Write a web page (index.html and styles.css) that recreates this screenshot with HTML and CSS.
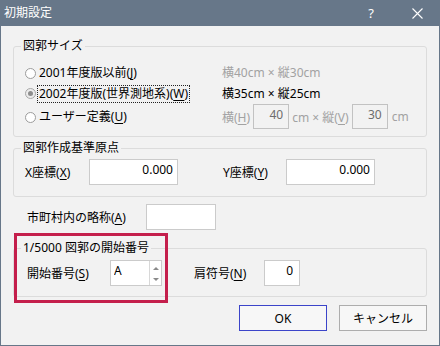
FILE: index.html
```html
<!DOCTYPE html>
<html lang="ja">
<head>
  <meta charset="UTF-8">
  <title>初期設定</title>
  <link rel="stylesheet" href="styles.css">
</head>
<body>
  <div class="window">
    <div class="titlebar">
      <span class="titlebar__text">初期設定</span>
      <span class="titlebar__btn">?</span>
      <span class="titlebar__btn">
        <svg width="11" height="11" viewBox="0 0 11 11"><path d="M0.5 0.5 L10.5 10.5 M10.5 0.5 L0.5 10.5" stroke="#fff" stroke-width="1.1" fill="none"/></svg>
      </span>
    </div>

    <div class="dialog">
      <!-- 図郭サイズ -->
      <div class="group group--size">
        <div class="group__title">図郭サイズ</div>
        <div class="size-grid">
          <label class="radio"><span class="radio__dot"></span>2001年度版以前(<u>J</u>)</label>
          <div class="size-note is-disabled">横40cm × 縦30cm</div>

          <label class="radio radio--checked"><span class="radio__dot"></span><span class="radio__focus">2002年度版(世界測地系)(<u>W</u>)</span></label>
          <div class="size-note">横35cm × 縦25cm</div>

          <label class="radio"><span class="radio__dot"></span>ユーザー定義(<u>U</u>)</label>
          <div class="size-custom is-disabled">
            <span>横(<u>H</u>)</span>
            <input class="field field--disabled field--small" value="40" disabled>
            <span>cm × 縦(<u>V</u>)</span>
            <input class="field field--disabled field--small" value="30" disabled>
            <span>cm</span>
          </div>
        </div>
      </div>

      <!-- 図郭作成基準原点 -->
      <div class="group group--origin">
        <div class="group__title">図郭作成基準原点</div>
        <div class="coord-row">
          <span class="coord-label">X座標(<u>X</u>)</span>
          <input class="field field--coord" value="0.000">
          <span class="coord-label coord-label--y">Y座標(<u>Y</u>)</span>
          <input class="field field--coord" value="0.000">
        </div>
      </div>

      <div class="abbr-row">
        <span class="abbr-label">市町村内の略称(<u>A</u>)</span>
        <input class="field field--abbr" value="">
      </div>

      <!-- 1/5000 図郭の開始番号 -->
      <div class="group group--start">
        <div class="group__title">1/5000 図郭の開始番号</div>
        <div class="start-row">
          <span class="start-label">開始番号(<u>S</u>)</span>
          <div class="spin">
            <input class="spin__input" value="A">
            <div class="spin__btns">
              <span class="spin__arrow spin__arrow--up"></span>
              <span class="spin__arrow spin__arrow--down"></span>
            </div>
          </div>
          <span class="start-label start-label--suffix">肩符号(<u>N</u>)</span>
          <input class="field field--small field--suffix" value="0">
        </div>
      </div>

      <div class="buttons">
        <button class="btn btn--default">OK</button>
        <button class="btn">キャンセル</button>
      </div>
    </div>

    <div class="highlight"></div>
  </div>
</body>
</html>
```

FILE: styles.css
```css
/* ====== ダイアログ ====== */
html, body {
  margin: 0;
  padding: 0;
}

body {
  font-family: "Noto Sans", "Noto Sans CJK JP", sans-serif;
  font-size: 12px;
  color: #000;
}

u {
  text-decoration-thickness: 1px;
  text-underline-offset: 2px;
}

.window {
  position: relative;
  box-sizing: border-box;
  width: 440px;
  height: 346px;
  border: 1px solid #677789;
  border-top: 0;
  background: #f2f2f2;
}

/* ---- タイトルバー ---- */
.titlebar {
  display: flex;
  align-items: center;
  height: 26px;
  margin: 0 -1px;
  background: #677789;
  color: #fff;
}

.titlebar__text {
  flex: 1;
  padding-left: 4px;
  line-height: 26px;
}

.titlebar__btn {
  display: flex;
  align-items: center;
  justify-content: center;
  width: 46px;
  height: 26px;
  font-size: 13px;
}

/* ---- 本体 ---- */
.dialog {
  padding: 0 12px;
}

.group {
  border: 1px solid #dcdcdc;
  border-radius: 3px;
}

.group__title {
  width: fit-content;
  margin: -9px 0 0 7px;
  padding: 0 2px;
  line-height: 16px;
  background: #f2f2f2;
}

.group--size   { margin-top: 20px; padding-bottom: 6px; }
.group--origin { margin-top: 11px; padding-bottom: 11px; }
.group--start  { margin-top: 18px; padding-bottom: 10px; }

/* 図郭サイズ */
.size-grid {
  display: grid;
  grid-template-columns: 197px 1fr;
  grid-template-rows: 20px 21px 26px;
  align-items: center;
  margin-top: 9px;
  padding-left: 11px;
}

.radio {
  display: flex;
  align-items: center;
  line-height: 16px;
}

.radio__dot {
  position: relative;
  box-sizing: border-box;
  width: 11px;
  height: 11px;
  margin-right: 3px;
  border: 1px solid #9c9c9c;
  border-radius: 50%;
  background: #fff;
}

.radio--checked .radio__dot {
  background: #ececec;
  border-color: #a8a8a8;
}

.radio--checked .radio__dot::after {
  content: '';
  position: absolute;
  top: 2px;
  left: 2px;
  width: 5px;
  height: 5px;
  border-radius: 50%;
  background: #8d8d8d;
}

.radio__focus {
  margin-left: -2px;
  padding: 0 1px;
  border: 1px dotted #222;
}

.size-note {
  line-height: 16px;
}

.is-disabled {
  color: #a2a2a2;
}

.size-custom {
  display: flex;
  align-items: center;
  gap: 3px;
  align-self: start;
}

.size-custom span:last-child {
  margin-left: 1px;
}

/* 入力欄 */
.field {
  box-sizing: border-box;
  height: 26px;
  margin: 0;
  padding: 0 5px 5px;
  border: 1px solid #cbcbcb;
  background: #fff;
  font: inherit;
  color: #000;
  text-align: right;
  outline: none;
}

.field--small {
  width: 36px;
}

.field--disabled {
  height: 25px;
  border-color: #c2c2c2;
  background: #f2f2f2;
  color: #6d6d6d;
}

.field--coord {
  width: 89px;
  padding-right: 4px;
}

.field--abbr {
  width: 70px;
}

/* 図郭作成基準原点 */
.coord-row {
  display: flex;
  align-items: center;
  margin-top: 3px;
  padding-left: 11px;
}

.coord-label {
  width: 64px;
}

.coord-label--y {
  width: 63px;
  margin-left: 45px;
}

/* 略称 */
.abbr-row {
  display: flex;
  align-items: center;
  margin-top: 7px;
}

.abbr-label {
  width: 119px;
  padding-left: 14px;
}

/* 開始番号 */
.start-row {
  display: flex;
  align-items: center;
  margin-top: 4px;
  padding-left: 13px;
}

.start-label {
  width: 83px;
}

.start-label--suffix {
  width: 70px;
  margin-left: 32px;
}

.field--suffix {
  padding-right: 6px;
}

.spin {
  display: flex;
  box-sizing: border-box;
  width: 52px;
  height: 26px;
  border: 1px solid #cbcbcb;
  background: #fff;
}

.spin__input {
  width: 35px;
  margin: 0;
  padding: 0 0 5px 3px;
  border: 0;
  font: inherit;
  outline: none;
  background: transparent;
}

.spin__btns {
  display: flex;
  flex-direction: column;
  align-items: center;
  justify-content: space-between;
  width: 15px;
  padding: 6px 0 4px;
  border-left: 1px solid #d8d8d8;
}

.spin__arrow {
  width: 0;
  height: 0;
  border-left: 3px solid transparent;
  border-right: 3px solid transparent;
}

.spin__arrow--up   { border-bottom: 3px solid #8a8a8a; }
.spin__arrow--down { border-top: 3px solid #8a8a8a; }

/* ボタン */
.buttons {
  display: flex;
  justify-content: flex-end;
  gap: 12px;
  margin-top: 8px;
}

.btn {
  box-sizing: border-box;
  width: 88px;
  height: 26px;
  margin: 0;
  border: 1px solid #adadad;
  background: #f7f7f7;
  font: inherit;
  color: #000;
}

.btn--default {
  border-color: #3b44c9;
}

/* 注目枠 */
.highlight {
  position: absolute;
  top: 233px;
  left: 13px;
  width: 148px;
  height: 64px;
  border: 3px solid #c41f4c;
  pointer-events: none;
}
```
